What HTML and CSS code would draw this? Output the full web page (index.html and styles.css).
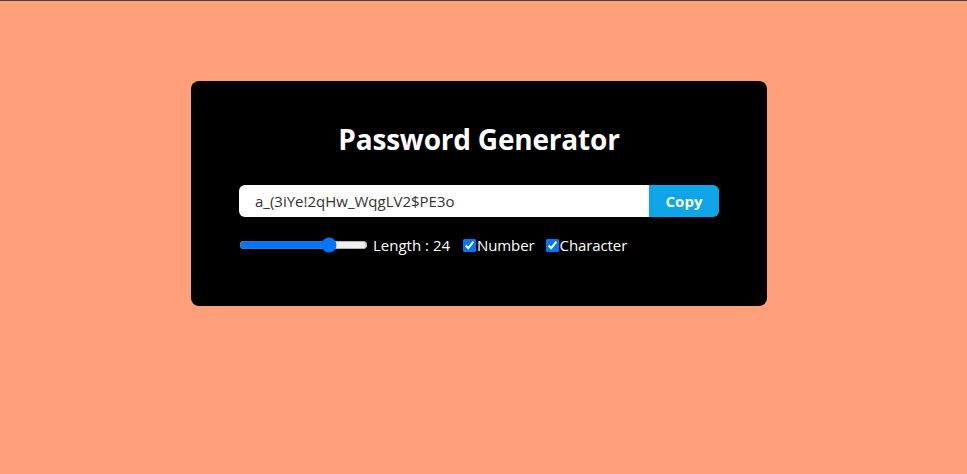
FILE: index.html
```html
<!DOCTYPE html>
<html>
<head>
<meta charset="utf-8">
<link rel="stylesheet" href="styles.css">
</head>
<body>
<div class="topline"></div>
<div class="card">
  <h1 class="title">Password Generator</h1>
  <div class="field">
    <input class="pw" type="text" value="a_(3iYe!2qHw_WqgLV2$PE3o" readonly>
    <button class="copy">Copy</button>
  </div>
  <div class="controls">
    <input class="range" type="range" min="8" max="30" value="24">
    <label class="len">Length : 24</label>
    <label class="opt"><input type="checkbox" checked>Number</label>
    <label class="opt"><input type="checkbox" checked>Character</label>
  </div>
</div>
</body>
</html>
```
FILE: styles.css
```css
html, body {
  margin: 0;
  padding: 0;
  background: #ffa07a;
  font-family: "Open Sans", "Noto Sans", sans-serif;
  height: 100%;
}
.topline {
  height: 1px;
  background: #3f4246;
}
.card {
  width: 576px;
  box-sizing: border-box;
  margin: 80px 0 0 191px;
  background: #000;
  border-radius: 8px;
  padding: 40px 48px 49px;
  color: #fff;
}
.title {
  margin: 0 0 28px;
  text-align: center;
  font-size: 28px;
  line-height: 36px;
  font-weight: 700;
  letter-spacing: -0.2px;
}
.field {
  display: flex;
  height: 32px;
  border-radius: 6px;
  overflow: hidden;
  margin-bottom: 16px;
}
.pw {
  flex: 1;
  border: none;
  outline: none;
  margin: 0;
  padding: 0 16px;
  font-family: inherit;
  font-size: 15px;
  color: #333;
  background: #fff;
}
.copy {
  width: 70px;
  border: none;
  margin: 0;
  background: #0ea5e9;
  color: #fff;
  font-family: inherit;
  font-weight: 700;
  font-size: 15px;
}
.controls {
  display: flex;
  align-items: center;
  height: 24px;
  font-size: 15px;
}
.range {
  width: 129px;
  margin: 0 5px 0 0;
  accent-color: #0075ff;
}
.len {
  margin-right: 10px;
}
.opt {
  display: flex;
  align-items: center;
  margin-right: 8px;
  letter-spacing: -0.1px;
}
.opt input {
  margin: 0 1px 0 3px;
}
```
